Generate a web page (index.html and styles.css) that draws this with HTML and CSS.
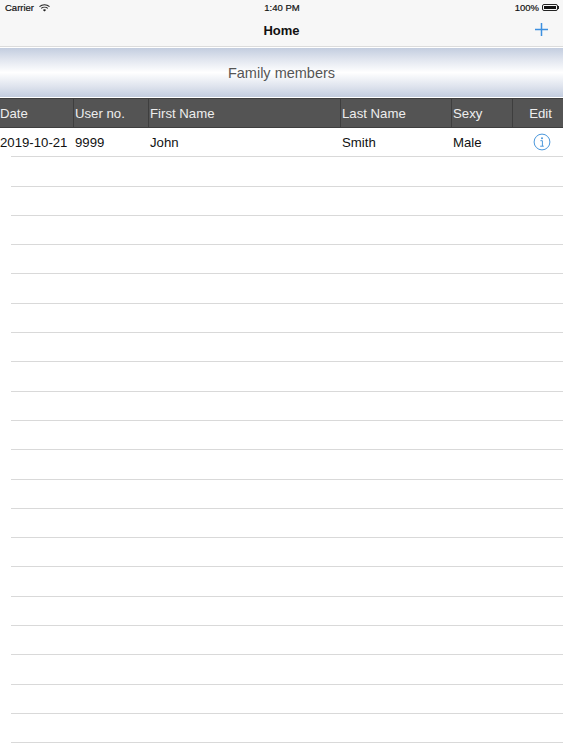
FILE: index.html
```html
<html>

<head>
    <meta charset="UTF-8">
    <title>Home</title>
    <link rel="stylesheet" href="styles.css">
</head>

<body>
    <div class="nav-bar">
        <div class="status-bar">
            <div class="status-left">
                <span>Carrier</span>
                <svg class="wifi" width="11" height="8" viewBox="0 0 11 8">
                    <path d="M0.5 2.6C3.3 0.2 7.7 0.2 10.5 2.6" fill="none" stroke="#222" stroke-width="1.1" />
                    <path d="M2.2 4.3C4 2.8 7 2.8 8.8 4.3" fill="none" stroke="#222" stroke-width="1.1" />
                    <path d="M3.9 5.9L5.5 7.6L7.1 5.9C6.2 5.1 4.8 5.1 3.9 5.9Z" fill="#222" />
                </svg>
            </div>
            <div class="status-time">1:40 PM</div>
            <div class="status-right">
                <span>100%</span>
                <div class="battery"><div class="battery-fill"></div></div>
                <div class="battery-tip"></div>
            </div>
        </div>
        <div class="title-bar">
            <div class="title">Home</div>
            <svg class="add-icon" width="13" height="13" viewBox="0 0 13 13">
                <path d="M6.5 0V13M0 6.5H13" fill="none" stroke="#3d90e0" stroke-width="1.5" />
            </svg>
        </div>
    </div>

    <div class="banner">Family members</div>

    <div class="table-head">
        <div class="cell date">Date</div>
        <div class="cell user">User no.</div>
        <div class="cell first">First Name</div>
        <div class="cell last">Last Name</div>
        <div class="cell sexy">Sexy</div>
        <div class="cell edit">Edit</div>
    </div>

    <div class="row first-row">
        <div class="cell date">2019-10-21</div>
        <div class="cell user">9999</div>
        <div class="cell first">John</div>
        <div class="cell last">Smith</div>
        <div class="cell sexy">Male</div>
        <div class="cell edit">
            <svg width="18" height="18" viewBox="0 0 18 18">
                <circle cx="9" cy="9" r="7.9" fill="none" stroke="#4a97dc" stroke-width="1" />
                <circle cx="9" cy="5.3" r="1" fill="#4a97dc" />
                <path d="M7.4 7.7H9.4V13M7.2 13.2H10.8" fill="none" stroke="#4a97dc" stroke-width="1" />
            </svg>
        </div>
    </div>

    <div id="rows"></div>

    <script>
        // Empty rows under the first one
        const rows = document.getElementById("rows");
        for (let i = 0; i < 20; i++) {
            const div = document.createElement("div");
            div.className = "row";
            rows.appendChild(div);
        }
    </script>
</body>

</html>
```

FILE: styles.css
```css
html {
    box-sizing: border-box;
}

*,
*:before,
*:after {
    box-sizing: inherit;
}

body {
    font-family: "Liberation Sans", Arial, Helvetica, sans-serif;
    margin: 0;
    background-color: #fff;
    color: #111;
    height: 750px;
    overflow: hidden;
}

.nav-bar {
    height: 47px;
    background-color: #f7f7f7;
    border-bottom: 1px solid #dcdcdc;
}

.status-bar {
    display: grid;
    grid-template-columns: 1fr auto 1fr;
    align-items: center;
    height: 15px;
    padding: 0 4px 0 5px;
    font-size: 9.5px;
    color: #111;
    -webkit-text-stroke: 0.2px #111;
}

.status-left {
    display: flex;
    align-items: center;
    gap: 5px;
}

.status-right {
    display: flex;
    align-items: center;
    justify-content: flex-end;
}

.battery {
    width: 16px;
    height: 7px;
    margin-left: 3px;
    padding: 1px;
    border: 1px solid #222;
    border-radius: 2px;
}

.battery-fill {
    height: 100%;
    background-color: #111;
}

.battery-tip {
    width: 1px;
    height: 3px;
    background-color: #222;
}

.title-bar {
    display: flex;
    align-items: center;
    justify-content: center;
    height: 31px;
    position: relative;
}

.title {
    font-size: 13px;
    font-weight: bold;
}

.add-icon {
    position: absolute;
    right: 15px;
    top: 8px;
}

.banner {
    display: flex;
    align-items: center;
    justify-content: center;
    height: 49px;
    margin-top: 1px;
    font-size: 14.5px;
    color: #555;
    background: linear-gradient(#c3cddf 0%, #dfe4ee 22%, #fff 50%, #dfe4ee 78%, #c3cddf 100%);
}

.table-head {
    display: grid;
    grid-template-columns: 74px 75px 192px 111px 61px 50px;
    height: 30px;
    margin-top: 1px;
    background-color: #545454;
    border-top: 1px solid #3e3e3e;
    border-bottom: 1px solid #3e3e3e;
    color: #eee;
    font-size: 13.2px;
}

.table-head .cell {
    display: flex;
    align-items: center;
    padding-left: 1px;
    border-right: 1px solid #3e3e3e;
}

.table-head .date {
    padding-left: 0;
}

.table-head .edit {
    justify-content: center;
    padding-left: 5px;
    border-right: none;
}

.row {
    height: 29.3px;
    margin-left: 11px;
    border-bottom: 1px solid #d9d9d9;
}

.first-row {
    display: grid;
    grid-template-columns: 63px 75px 192px 111px 61px 50px;
    align-items: center;
    padding-top: 1px;
    font-size: 13.2px;
}

.first-row .cell {
    padding-left: 1px;
}

.first-row .date {
    margin-left: -11px;
    padding-left: 0;
    white-space: nowrap;
}

.first-row .edit {
    display: flex;
    justify-content: center;
    padding-left: 7px;
    margin-top: -2px;
}

.first-row svg {
    display: block;
}
```
